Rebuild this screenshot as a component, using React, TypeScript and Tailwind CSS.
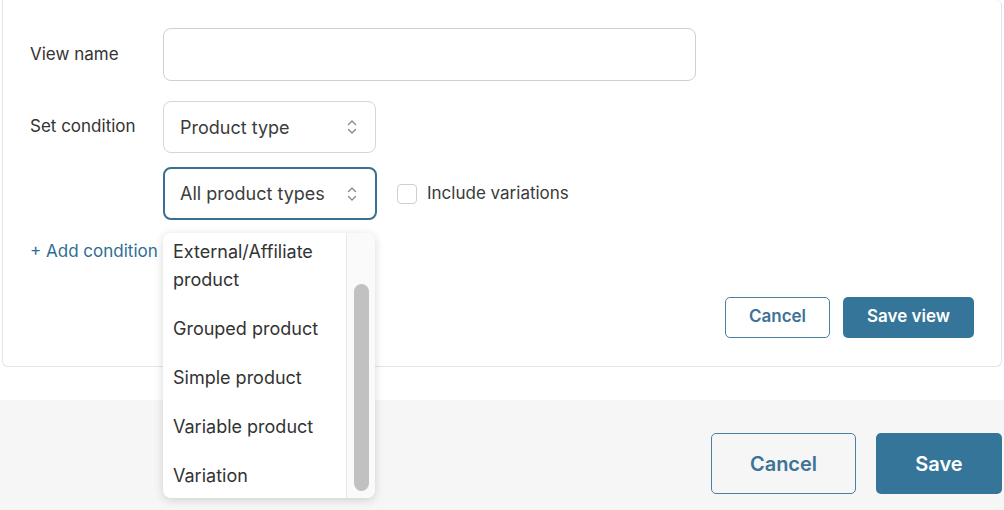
import React from 'react';

function UpDown() {
  return (
    <svg width="12" height="18" viewBox="0 0 12 18" fill="none" stroke="#8a8a8a" strokeWidth="1.4" strokeLinecap="round" strokeLinejoin="round">
      <path d="M2.5 6.5 L6 3 L9.5 6.5" />
      <path d="M2.5 11.5 L6 15 L9.5 11.5" />
    </svg>
  );
}

const options = ['External/Affiliate product', 'Grouped product', 'Simple product', 'Variable product', 'Variation'];

export default function App() {
  return (
    <div className="w-[1004px] h-[510px] bg-white overflow-hidden text-[#2c2c2c]" style={{ fontFamily: 'Inter, "Noto Sans", sans-serif' }}>
      {/* View editor card */}
      <div className="relative mx-[2px] h-[367px] border border-t-0 border-[#e4e4e4] rounded-b-md rounded-tr-md pl-[27px] pr-[27px] pt-[28px]">
        <div className="grid grid-cols-[133px_1fr] items-center gap-y-[20px]">
          <span className="text-[17px] text-[#333]">View name</span>
          <div className="w-[533px] h-[53px] border border-[#d0d0d0] rounded-[8px]" />

          <span className="text-[17px] text-[#333] self-start pt-[13px]">Set condition</span>
          <div className="flex flex-col gap-[14px]">
            <div className="w-[213px] h-[52px] border border-[#d6d6d6] rounded-[8px] flex items-center justify-between pl-[16px] pr-[17px] text-[18px] text-[#3c3c3c]">
              <span>Product type</span>
              <UpDown />
            </div>
            <div className="flex items-center gap-[20px]">
              <div className="w-[214px] h-[53px] border-2 border-[#39708f] rounded-[8px] flex items-center justify-between pl-[15px] pr-[17px] text-[18px] text-[#3c3c3c]">
                <span>All product types</span>
                <UpDown />
              </div>
              <div className="flex items-center gap-[10px]">
                <div className="w-[20px] h-[20px] border border-[#cfcfcf] rounded-[4px]" />
                <span className="text-[17px] text-[#3a3a3a]">Include variations</span>
              </div>
            </div>
          </div>
        </div>

        <div className="mt-[19px] text-[17px] text-[#2f6d93]">+ Add condition</div>

        <div className="flex justify-end gap-[13px] mt-[32px]">
          <button className="w-[105px] h-[41px] border border-[#4a7fa0] rounded-[5px] text-[17px] font-semibold text-[#3d7397]">Cancel</button>
          <button className="w-[131px] h-[41px] bg-[#36759a] rounded-[5px] text-[17px] font-semibold text-white">Save view</button>
        </div>

        {/* Open dropdown list */}
        <div className="absolute left-[160px] top-[233px] w-[212px] h-[265px] bg-white rounded-[8px] shadow-[0_2px_10px_rgba(0,0,0,0.16)] flex overflow-hidden z-10">
          <div className="flex-1 flex flex-col pl-[10px] pt-[5px] text-[18px] text-[#333] leading-[28px]">
            {options.map((o, i) => (
              <div key={o} className={i === 0 ? 'pb-[10px] pr-[20px]' : 'py-[10.5px]'}>{o}</div>
            ))}
          </div>
          <div className="w-[29px] border-l border-[#e8e8e8] bg-[#fafafa] flex justify-center pt-[51px] pb-[7px]">
            <div className="w-[15px] h-full bg-[#c1c1c1] rounded-full" />
          </div>
        </div>
      </div>

      {/* Footer */}
      <div className="mt-[33px] h-[110px] bg-[#f6f6f6] flex justify-end items-start gap-[20px] pr-[2px] pt-[33px]">
        <button className="w-[145px] h-[61px] border border-[#4a7fa0] rounded-[5px] text-[20px] font-semibold text-[#3d7397]">Cancel</button>
        <button className="w-[126px] h-[61px] bg-[#36759a] rounded-[5px] text-[20px] font-semibold text-white">Save</button>
      </div>
    </div>
  );
}
